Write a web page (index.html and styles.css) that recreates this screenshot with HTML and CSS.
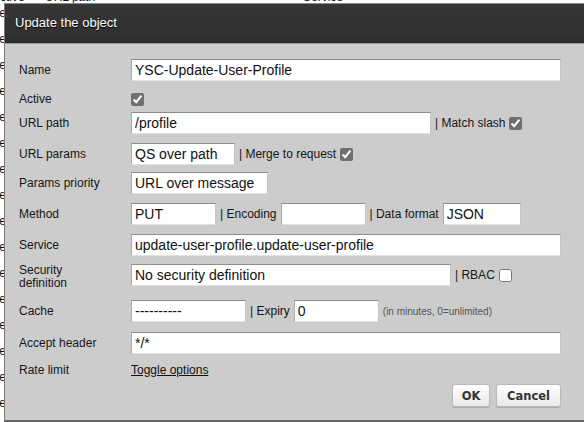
FILE: index.html
```html
<!DOCTYPE html>
<html lang="en">
<head>
<meta charset="utf-8">
<title>Update the object</title>
<link rel="stylesheet" href="styles.css">
</head>
<body>
<div class="bg">
  <div class="bg-head">
    <span class="bg-col1">Active</span>
    <span class="bg-col2">URL path</span>
    <span class="bg-col3">Service</span>
  </div>
  <ul class="bg-list">
    <li>Service</li><li>Service</li><li>Service</li><li>Service</li>
    <li>Service</li><li>Service</li><li>Service</li><li>Service</li>
    <li>Service</li><li>Service</li><li>Service</li><li>Service</li>
    <li>Service</li><li>Service</li><li>Service</li><li>Service</li>
  </ul>
</div>

<div class="dialog">
  <div class="titlebar">Update the object</div>
  <form class="form">
    <div class="row">
      <label class="lbl">Name</label>
      <input class="inp w-wide" type="text" value="YSC-Update-User-Profile">
    </div>
    <div class="row m7">
      <label class="lbl">Active</label>
      <input class="cb" type="checkbox" checked>
    </div>
    <div class="row m2">
      <label class="lbl">URL path</label>
      <input class="inp w-path" type="text" value="/profile">
      <span class="sep">| Match slash</span>
      <input class="cb" type="checkbox" checked>
    </div>
    <div class="row m9">
      <label class="lbl">URL params</label>
      <input class="inp w-params" type="text" value="QS over path">
      <span class="sep">| Merge to request</span>
      <input class="cb" type="checkbox" checked>
    </div>
    <div class="row m7">
      <label class="lbl">Params priority</label>
      <input class="inp w-prio" type="text" value="URL over message">
    </div>
    <div class="row m9">
      <label class="lbl">Method</label>
      <input class="inp w-small" type="text" value="PUT">
      <span class="sep">| Encoding</span>
      <input class="inp w-small" type="text" value="">
      <span class="sep">| Data format</span>
      <input class="inp w-format" type="text" value="JSON">
    </div>
    <div class="row m9">
      <label class="lbl">Service</label>
      <input class="inp w-wide" type="text" value="update-user-profile.update-user-profile">
    </div>
    <div class="row m8">
      <label class="lbl lbl-two">Security<br>definition</label>
      <input class="inp w-sec" type="text" value="No security definition">
      <span class="sep">| RBAC</span>
      <input class="cb" type="checkbox">
    </div>
    <div class="row m14">
      <label class="lbl">Cache</label>
      <input class="inp w-cache" type="text" value="----------">
      <span class="sep">| Expiry</span>
      <input class="inp w-small" type="text" value="0">
      <span class="hint">(in minutes, 0=unlimited)</span>
    </div>
    <div class="row m10">
      <label class="lbl">Accept header</label>
      <input class="inp w-wide" type="text" value="*/*">
    </div>
    <div class="row m5">
      <label class="lbl">Rate limit</label>
      <a class="link" href="#">Toggle options</a>
    </div>
    <div class="buttons">
      <button class="btn btn-ok" type="button">OK</button>
      <button class="btn btn-cancel" type="button">Cancel</button>
    </div>
  </form>
</div>
</body>
</html>
```
FILE: styles.css
```css
html, body {
  margin: 0;
  padding: 0;
  height: 100%;
  overflow: hidden;
  background: #fff;
  font-family: "Liberation Sans", Arial, sans-serif;
}

/* page underneath the modal */
.bg {
  position: absolute;
  inset: 0;
  font-size: 12px;
  color: #111;
}
.bg-head {
  display: grid;
  grid-template-columns: 53px 258px auto;
  margin-top: -10px;
  margin-left: -8px;
  line-height: 14px;
}
.bg-list {
  list-style: none;
  margin: -4px 0 0 -54px;
  padding: 0;
  width: 60px;
  text-align: right;
  line-height: 26px;
}

/* dialog */
.dialog {
  position: absolute;
  left: 4px;
  top: 3px;
  width: 640px;
  height: 416px;
  background: #cccccc;
  border-left: 1px solid #7a7a7a;
  border-top: 1px solid #8a8a8a;
  border-bottom: 2px solid #666;
}
.titlebar {
  height: 40px;
  box-sizing: border-box;
  padding: 11px 0 0 10px;
  background: linear-gradient(#363636, #303030 80%, #2a2a2a);
  border-bottom: 1px solid #9a9a9a;
  color: #fff;
  font-size: 13px;
  line-height: 15px;
  text-shadow: 0 1px 1px #000;
}

.form {
  width: 542px;
  padding: 15px 0 0 14px;
  margin: 0;
}
.row {
  display: flex;
  align-items: center;
  height: 22px;
}
.m2 { margin-top: 2px; }
.m5 { margin-top: 5px; }
.m7 { margin-top: 7px; }
.m8 { margin-top: 8px; }
.m9 { margin-top: 9px; }
.m10 { margin-top: 10px; }
.m14 { margin-top: 14px; }

.lbl {
  flex: 0 0 112px;
  font-size: 12px;
  color: #161616;
}
.lbl-two {
  line-height: 13px;
  margin-top: 3px;
}

.inp {
  box-sizing: border-box;
  height: 22px;
  margin: 0;
  padding: 0 3px;
  border: 1px solid #c4c4c4;
  border-top-color: #8c8c8c;
  border-left-color: #aaa;
  border-bottom-color: #e2e2e2;
  background: #fff;
  font-family: "Liberation Sans", Arial, sans-serif;
  font-size: 14px;
  color: #111;
  outline: none;
}
.w-wide { width: 431px; }
.w-path { width: 300px; }
.w-params { width: 104px; }
.w-prio { width: 137px; }
.w-small { width: 85px; }
.w-format { width: 78px; }
.w-sec { width: 320px; }
.w-cache { width: 115px; }

.sep {
  font-size: 12px;
  color: #161616;
  margin: 0 4px;
  white-space: nowrap;
}
.hint {
  font-size: 10px;
  color: #555;
  margin-left: 4px;
  white-space: nowrap;
}

.cb {
  width: 13px;
  height: 13px;
  margin: 0;
  accent-color: #6f6f6f;
}

.link {
  font-size: 12px;
  color: #111;
  text-decoration: underline;
}

.buttons {
  display: flex;
  justify-content: flex-end;
  gap: 6px;
  margin-top: 3px;
}
.btn {
  height: 23px;
  box-sizing: border-box;
  padding: 0;
  border: 1px solid #b9b9b9;
  border-radius: 3px;
  background: linear-gradient(#ffffff, #e9e9e9);
  box-shadow: 0 1px 1px rgba(0,0,0,0.18);
  font-family: "DejaVu Sans", Verdana, sans-serif;
  font-weight: bold;
  font-size: 11.5px;
  color: #333;
}
.btn-ok { width: 38px; }
.btn-cancel { width: 65px; }
```
